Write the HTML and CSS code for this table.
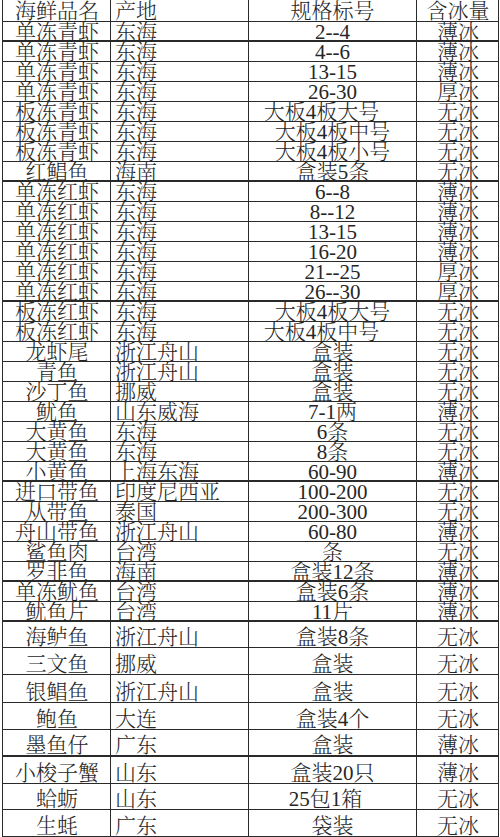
FILE: index.html
```html
<!DOCTYPE html>
<html lang="zh-CN">
<head>
<meta charset="utf-8">
<title>海鲜品名</title>
<link rel="stylesheet" href="styles.css">
</head>
<body>
<div class="sheet">
  <div class="row head"><div class="c1">海鲜品名</div><div class="c2">产地</div><div class="c3">规格标号</div><div class="c4">含冰量</div></div>
  <div class="row thick"><div class="c1">单冻青虾</div><div class="c2">东海</div><div class="c3">2--4</div><div class="c4">薄冰</div></div>
  <div class="row"><div class="c1">单冻青虾</div><div class="c2">东海</div><div class="c3">4--6</div><div class="c4">薄冰</div></div>
  <div class="row"><div class="c1">单冻青虾</div><div class="c2">东海</div><div class="c3">13-15</div><div class="c4">薄冰</div></div>
  <div class="row"><div class="c1">单冻青虾</div><div class="c2">东海</div><div class="c3">26-30</div><div class="c4">厚冰</div></div>
  <div class="row"><div class="c1">板冻青虾</div><div class="c2">东海</div><div class="c3 shl">大板4板大号</div><div class="c4">无冰</div></div>
  <div class="row"><div class="c1">板冻青虾</div><div class="c2">东海</div><div class="c3">大板4板中号</div><div class="c4">无冰</div></div>
  <div class="row"><div class="c1">板冻青虾</div><div class="c2">东海</div><div class="c3">大板4板小号</div><div class="c4">无冰</div></div>
  <div class="row thick"><div class="c1">红鲳鱼</div><div class="c2">海南</div><div class="c3">盒装5条</div><div class="c4">无冰</div></div>
  <div class="row"><div class="c1">单冻红虾</div><div class="c2">东海</div><div class="c3">6--8</div><div class="c4">薄冰</div></div>
  <div class="row"><div class="c1">单冻红虾</div><div class="c2">东海</div><div class="c3">8--12</div><div class="c4">薄冰</div></div>
  <div class="row"><div class="c1">单冻红虾</div><div class="c2">东海</div><div class="c3">13-15</div><div class="c4">薄冰</div></div>
  <div class="row"><div class="c1">单冻红虾</div><div class="c2">东海</div><div class="c3">16-20</div><div class="c4">薄冰</div></div>
  <div class="row"><div class="c1">单冻红虾</div><div class="c2">东海</div><div class="c3">21--25</div><div class="c4">厚冰</div></div>
  <div class="row thick"><div class="c1">单冻红虾</div><div class="c2">东海</div><div class="c3">26--30</div><div class="c4">厚冰</div></div>
  <div class="row"><div class="c1">板冻红虾</div><div class="c2">东海</div><div class="c3">大板4板大号</div><div class="c4">无冰</div></div>
  <div class="row"><div class="c1">板冻红虾</div><div class="c2">东海</div><div class="c3 shl">大板4板中号</div><div class="c4">无冰</div></div>
  <div class="row"><div class="c1">龙虾尾</div><div class="c2">浙江舟山</div><div class="c3">盒装</div><div class="c4">无冰</div></div>
  <div class="row"><div class="c1">青鱼</div><div class="c2">浙江舟山</div><div class="c3">盒装</div><div class="c4">无冰</div></div>
  <div class="row"><div class="c1">沙丁鱼</div><div class="c2">挪威</div><div class="c3">盒装</div><div class="c4">无冰</div></div>
  <div class="row"><div class="c1">鱿鱼</div><div class="c2">山东威海</div><div class="c3">7-1两</div><div class="c4">薄冰</div></div>
  <div class="row"><div class="c1">大黄鱼</div><div class="c2">东海</div><div class="c3">6条</div><div class="c4">无冰</div></div>
  <div class="row"><div class="c1">大黄鱼</div><div class="c2">东海</div><div class="c3">8条</div><div class="c4">无冰</div></div>
  <div class="row thick"><div class="c1">小黄鱼</div><div class="c2">上海东海</div><div class="c3">60-90</div><div class="c4">薄冰</div></div>
  <div class="row"><div class="c1">进口带鱼</div><div class="c2">印度尼西亚</div><div class="c3">100-200</div><div class="c4">无冰</div></div>
  <div class="row"><div class="c1">从带鱼</div><div class="c2">泰国</div><div class="c3">200-300</div><div class="c4">无冰</div></div>
  <div class="row"><div class="c1">舟山带鱼</div><div class="c2">浙江舟山</div><div class="c3">60-80</div><div class="c4">薄冰</div></div>
  <div class="row"><div class="c1">鲨鱼肉</div><div class="c2">台湾</div><div class="c3">条</div><div class="c4">无冰</div></div>
  <div class="row thick"><div class="c1">罗非鱼</div><div class="c2">海南</div><div class="c3">盒装12条</div><div class="c4">薄冰</div></div>
  <div class="row"><div class="c1">单冻鱿鱼</div><div class="c2">台湾</div><div class="c3">盒装6条</div><div class="c4">薄冰</div></div>
  <div class="row thick"><div class="c1">鱿鱼片</div><div class="c2">台湾</div><div class="c3">11片</div><div class="c4">薄冰</div></div>
  <div class="row tall h26"><div class="c1">海鲈鱼</div><div class="c2">浙江舟山</div><div class="c3">盒装8条</div><div class="c4">无冰</div></div>
  <div class="row tall h27"><div class="c1">三文鱼</div><div class="c2">挪威</div><div class="c3">盒装</div><div class="c4">无冰</div></div>
  <div class="row tall h28"><div class="c1">银鲳鱼</div><div class="c2">浙江舟山</div><div class="c3">盒装</div><div class="c4">无冰</div></div>
  <div class="row tall h27"><div class="c1">鲍鱼</div><div class="c2">大连</div><div class="c3">盒装4个</div><div class="c4">无冰</div></div>
  <div class="row tall h27 thick"><div class="c1">墨鱼仔</div><div class="c2">广东</div><div class="c3">盒装</div><div class="c4">薄冰</div></div>
  <div class="row tall h27"><div class="c1">小梭子蟹</div><div class="c2">山东</div><div class="c3">盒装20只</div><div class="c4">薄冰</div></div>
  <div class="row tall h26"><div class="c1">蛤蛎</div><div class="c2">山东</div><div class="c3 shs">25包1箱</div><div class="c4">无冰</div></div>
  <div class="row tall h27"><div class="c1">生蚝</div><div class="c2">广东</div><div class="c3">袋装</div><div class="c4">无冰</div></div>
</div>
</body>
</html>
```
FILE: styles.css
```css
html, body {
  margin: 0;
  padding: 0;
  background: #ffffff;
}
body {
  width: 500px;
  height: 837px;
  overflow: hidden;
  font-family: "Liberation Serif", "Noto Serif CJK SC", "Noto Sans CJK SC", serif;
  font-size: 21px;
  color: #262626;
}
.sheet {
  margin-left: 2px;
  width: 497px;
}
.row {
  display: grid;
  grid-template-columns: 109px 138px 168px 82px;
  height: 20px;
}
.row.head {
  height: 22px;
}
.row > div {
  box-sizing: border-box;
  border-right: 1px solid #2a2a2a;
  border-bottom: 1px solid #2a2a2a;
  display: flex;
  align-items: flex-end;
  line-height: 17px;
  white-space: nowrap;
  overflow: visible;
  font-weight: 300;
}
.row.head > div {
  line-height: 19px;
}
.row.thick > div {
  border-bottom-width: 2px;
  line-height: 16px;
}
.row .c1 {
  border-left: 1px solid #2a2a2a;
  justify-content: center;
  padding-left: 1px;
}
.row .c2 {
  justify-content: flex-start;
  padding-left: 4px;
}
.row .c3 {
  justify-content: center;
  padding-left: 0;
}
.row .c4 {
  justify-content: center;
  padding-left: 1px;
}
.row .c3.shl {
  padding-right: 22px;
}
.row .c3.shs {
  padding-right: 14px;
}
.row.tall > div {
  line-height: 18px;
  padding-bottom: 1px;
}
.row.h26 { height: 26px; }
.row.h27 { height: 27px; }
.row.h28 { height: 28px; }
```
